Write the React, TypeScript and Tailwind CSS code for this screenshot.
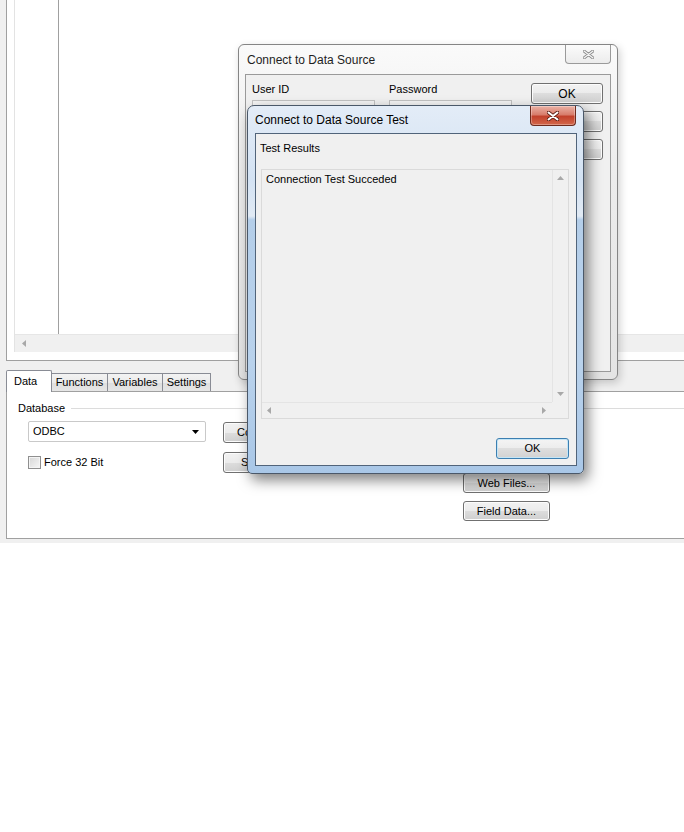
import React from "react";

const btn =
  "border border-[#707070] rounded-[3px] bg-[linear-gradient(#f2f2f2,#ebebeb_50%,#dddddd_50%,#cfcfcf)] text-[11px] leading-none text-black flex items-center justify-center shadow-[inset_0_0_0_1px_#fcfcfc]";

function ArrowUp() {
  return (
    <svg width="7" height="4" viewBox="0 0 7 4">
      <path d="M3.5 0L7 4H0Z" fill="#a8a8a8" />
    </svg>
  );
}
function ArrowDown() {
  return (
    <svg width="7" height="4" viewBox="0 0 7 4">
      <path d="M0 0H7L3.5 4Z" fill="#a8a8a8" />
    </svg>
  );
}
function ArrowLeft() {
  return (
    <svg width="4" height="7" viewBox="0 0 4 7">
      <path d="M4 0V7L0 3.5Z" fill="#a8a8a8" />
    </svg>
  );
}
function ArrowRight() {
  return (
    <svg width="4" height="7" viewBox="0 0 4 7">
      <path d="M0 0L4 3.5L0 7Z" fill="#a8a8a8" />
    </svg>
  );
}

function Tab({ label, active, width }: { label: string; active?: boolean; width: string }) {
  if (active) {
    return (
      <div
        className={`${width} h-[22px] -mb-px bg-white border border-b-0 border-[#898c95] rounded-t-[2px] flex items-center pl-[7px] text-[11px] text-black`}
      >
        {label}
      </div>
    );
  }
  return (
    <div
      className={`${width} h-[18px] bg-[linear-gradient(#f3f3f3,#ebebeb_50%,#dedede_50%,#e6e6e6)] border border-b-0 border-l-0 border-[#898c95] flex items-center justify-center text-[11px] text-black`}
    >
      {label}
    </div>
  );
}

export default function App() {
  return (
    <div className="w-[684px] h-[832px] bg-white relative overflow-hidden font-['Liberation_Sans',Arial,sans-serif] select-none">
      {/* main window */}
      <div className="h-[543px] bg-[#f0f0f0] flex flex-col">
        {/* top list panel */}
        <div className="ml-[6px] h-[361px] bg-white border-l border-b border-[#a0a0a0] pl-[7px] pb-[8px] flex">
          <div className="flex-1 border-l border-[#e3e3e3] flex flex-col">
            <div className="flex-1 flex">
              <div className="w-[44px] border-r border-[#a0a0a0]" />
            </div>
            <div className="h-[18px] bg-[#f0f0f0] border-t border-[#e6e6e6] flex items-center pl-[7px]">
              <ArrowLeft />
            </div>
          </div>
        </div>

        <div className="h-[9px]" />

        {/* tabs */}
        <div className="h-[21px] flex items-end pl-[6px] relative z-10">
          <Tab label="Data" active width="w-[46px]" />
          <Tab label="Functions" width="w-[56px]" />
          <Tab label="Variables" width="w-[55px]" />
          <Tab label="Settings" width="w-[48px]" />
        </div>

        {/* tab pane */}
        <div className="ml-[6px] h-[148px] bg-white border-l border-t border-b border-[#a0a0a0] pl-[11px] pt-[10px] flex flex-col">
          <div className="flex items-center h-[13px]">
            <span className="text-[11px] text-black leading-[13px]">Database</span>
            <div className="flex-1 h-px bg-[#dcdcdc] ml-[6px]" />
          </div>
          <div className="flex mt-[6px]">
            <div className="ml-[10px] w-[178px] flex flex-col">
              <div className="h-[21px] border border-[#c9c9c9] rounded-[2px] bg-white flex items-center pl-[4px] pr-[6px] text-[11px] text-black">
                <span className="flex-1">ODBC</span>
                <svg width="7" height="4" viewBox="0 0 7 4">
                  <path d="M0 0H7L3.5 4Z" fill="#000" />
                </svg>
              </div>
              <div className="mt-[12px] flex items-center">
                <div className="w-[13px] h-[13px] border border-[#8f8f8f] bg-[linear-gradient(135deg,#d6d6d6,#f7f7f7)] shadow-[inset_0_0_0_1px_#f4f4f4]" />
                <span className="ml-[3px] text-[11px] text-black">Force 32 Bit</span>
              </div>
            </div>
            <div className="ml-[17px] w-[80px] flex flex-col pt-px">
              <div className={`${btn} h-[21px] justify-start pl-[13px]`}>Connect...</div>
              <div className={`${btn} h-[21px] mt-[9px] justify-start pl-[17px]`}>Setup...</div>
            </div>
            <div className="ml-[160px] w-[87px] flex flex-col pt-[52px]">
              <div className={`${btn} h-[20px]`}>Web Files...</div>
              <div className={`${btn} h-[20px] mt-[8px]`}>Field Data...</div>
            </div>
          </div>
        </div>
        <div className="flex-1" />
      </div>

      {/* back dialog: Connect to Data Source */}
      <div className="absolute left-[238px] top-[44px] w-[380px] h-[336px] rounded-[6px] border border-[#858585] bg-[linear-gradient(#fafafa,#ececec_40%,#e4e4e4)] flex flex-col px-[6px] pb-[7px] shadow-[2px_3px_8px_rgba(0,0,0,0.18)]">
        <div className="h-[29px] flex items-center pl-[2px] text-[12px] text-[#1e1e1e]">
          Connect to Data Source
        </div>
        <div className="absolute left-[326px] top-0 w-[46px] h-[19px] rounded-b-[4px] border border-t-0 border-[#9a9a9a] bg-[linear-gradient(#fbfbfb,#ececec)] flex items-center justify-center">
          <svg width="11" height="9" viewBox="0 0 11 9">
            <path d="M1 1L10 8M10 1L1 8" stroke="#8a8a8a" strokeWidth="3" strokeLinecap="round" />
            <path d="M1 1L10 8M10 1L1 8" stroke="#f6f6f6" strokeWidth="1.2" strokeLinecap="round" />
          </svg>
        </div>
        <div className="flex-1 border border-[#9a9a9a] bg-[#f0f0f0] pl-[6px] pt-[8px] flex">
          <div className="w-[137px] flex flex-col">
            <span className="text-[11px] leading-[13px] text-black">User ID</span>
            <div className="mt-[4px] w-[123px] h-[20px] border border-[#c2c2c2] bg-[#f4f4f4]" />
          </div>
          <div className="w-[124px] flex flex-col">
            <span className="text-[11px] leading-[13px] text-black">Password</span>
            <div className="mt-[4px] w-[123px] h-[20px] border border-[#c2c2c2] bg-[#f4f4f4]" />
          </div>
          <div className="ml-[18px] w-[72px] flex flex-col gap-[7px]">
            <div className={`${btn} h-[21px] text-[12px]`}>OK</div>
            <div className={`${btn} h-[21px]`}>Cancel</div>
            <div className={`${btn} h-[21px]`}>Test</div>
          </div>
        </div>
      </div>

      {/* front dialog: Connect to Data Source Test */}
      <div className="absolute left-[247px] top-[105px] w-[337px] h-[369px] rounded-t-[7px] rounded-b-[5px] border border-[#4a5869] bg-[linear-gradient(#e3ecf7,#d3e2f3_20%,#e1eaf4_30%,#b4cee9_31%,#b9d2ec_70%,#a9c7e7)] flex flex-col pl-[7px] pr-[6px] pb-[7px] shadow-[4px_6px_14px_rgba(0,0,0,0.5)]">
        <div className="h-[27px] flex items-center text-[12px] text-black">Connect to Data Source Test</div>
        <div className="absolute left-[282px] top-0 w-[46px] h-[20px] rounded-b-[4px] border border-t-0 border-[#6d2a1d] bg-[linear-gradient(#eab2a6,#d87d6c_45%,#c2412c_55%,#d3684b)] flex items-center justify-center shadow-[inset_0_0_0_1px_rgba(255,255,255,0.3)]">
          <svg width="12" height="10" viewBox="0 0 12 10">
            <path d="M1.5 1.5L10.5 8.5M10.5 1.5L1.5 8.5" stroke="#5a1e14" strokeWidth="3.6" strokeLinecap="round" />
            <path d="M1.5 1.5L10.5 8.5M10.5 1.5L1.5 8.5" stroke="#ffffff" strokeWidth="2" strokeLinecap="round" />
          </svg>
        </div>
        <div className="flex-1 border border-[#51647a] bg-[#f0f0f0] flex flex-col pl-[4px] pt-[8px]">
          <span className="text-[11px] leading-[13px] text-black">Test Results</span>
          <div className="mt-[14px] ml-[1px] w-[308px] h-[250px] border border-[#dadada] bg-[#f0f0f0] flex flex-col">
            <div className="flex-1 flex">
              <div className="flex-1 pl-[4px] pt-[3px] text-[11px] leading-[13px] text-black">
                Connection Test Succeded
              </div>
              <div className="w-[16px] border-l border-[#e4e4e4] flex flex-col items-center justify-between pt-[6px] pb-[6px]">
                <ArrowUp />
                <ArrowDown />
              </div>
            </div>
            <div className="h-[16px] flex">
              <div className="flex-1 border-t border-[#e4e4e4] flex items-center justify-between pl-[5px] pr-[6px]">
                <ArrowLeft />
                <ArrowRight />
              </div>
              <div className="w-[16px] bg-[#f0f0f0]" />
            </div>
          </div>
          <div className="self-end mr-[7px] mt-[19px] w-[73px] h-[21px] rounded-[3px] border border-[#3c7fb1] bg-[linear-gradient(#f4f4f4,#ececec_50%,#dedede_50%,#d2d2d2)] shadow-[inset_0_0_0_1px_#c4e5f6] flex items-center justify-center text-[11px] text-black">
            OK
          </div>
        </div>
      </div>
    </div>
  );
}
